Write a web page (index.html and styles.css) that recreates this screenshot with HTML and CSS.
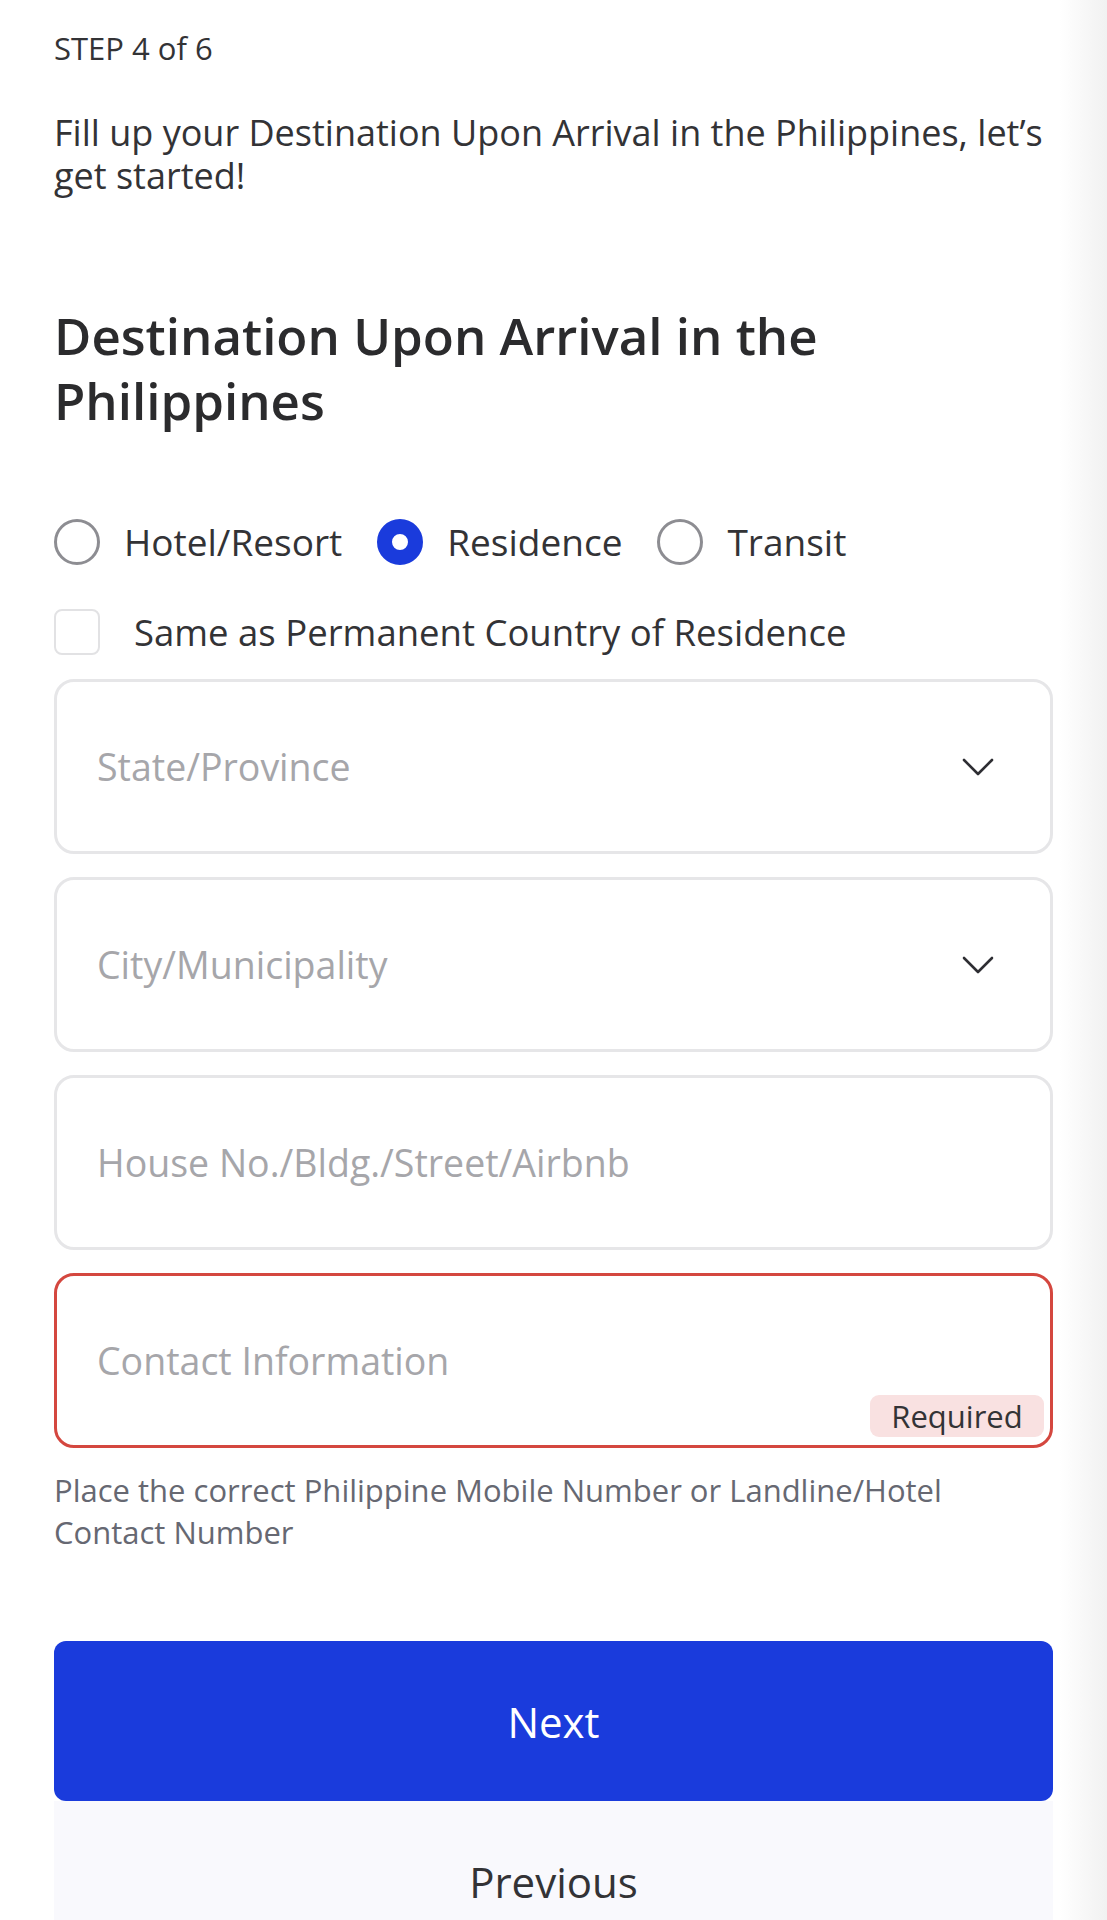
FILE: index.html
```html
<!DOCTYPE html>
<html lang="en">
<head>
<meta charset="utf-8">
<title>Step 4 of 6</title>
<link rel="stylesheet" href="styles.css">
</head>
<body>
<main class="page">
  <p class="step">STEP 4 of 6</p>
  <p class="intro">Fill up your Destination Upon Arrival in the Philippines, let’s get started!</p>
  <h1 class="title">Destination Upon Arrival in the Philippines</h1>

  <div class="radios">
    <label class="radio"><span class="dot"></span><span class="rlabel">Hotel/Resort</span></label>
    <label class="radio"><span class="dot checked"></span><span class="rlabel">Residence</span></label>
    <label class="radio"><span class="dot"></span><span class="rlabel">Transit</span></label>
  </div>

  <label class="check"><span class="box"></span><span class="clabel">Same as Permanent Country of Residence</span></label>

  <div class="fields">
    <div class="field">
      <span class="ph">State/Province</span>
      <svg class="chev" width="32" height="18" viewBox="0 0 32 18"><path d="M2 2 L16 16 L30 2" fill="none" stroke="#2e2e33" stroke-width="2.6" stroke-linecap="round" stroke-linejoin="round"/></svg>
    </div>
    <div class="field">
      <span class="ph">City/Municipality</span>
      <svg class="chev" width="32" height="18" viewBox="0 0 32 18"><path d="M2 2 L16 16 L30 2" fill="none" stroke="#2e2e33" stroke-width="2.6" stroke-linecap="round" stroke-linejoin="round"/></svg>
    </div>
    <div class="field">
      <span class="ph">House No./Bldg./Street/Airbnb</span>
    </div>
    <div class="field error">
      <span class="ph">Contact Information</span>
      <span class="badge">Required</span>
    </div>
  </div>

  <p class="helper">Place the correct Philippine Mobile Number or Landline/Hotel Contact Number</p>

  <div class="actions">
    <button class="btn next">Next</button>
    <button class="btn prev">Previous</button>
  </div>
</main>
</body>
</html>
```

FILE: styles.css
```css
* { box-sizing: border-box; }
html, body { margin: 0; padding: 0; }
body {
  font-family: "Open Sans", Lato, sans-serif;
  color: #333336;
  background: linear-gradient(to right, #ffffff 0, #ffffff 1060px, #f1f1f1 1107px);
  height: 1920px;
  overflow: hidden;
}
.page {
  width: 1107px;
  padding: 0 54px;
}
.step {
  margin: 0;
  padding-top: 31px;
  font-size: 31px;
  line-height: 34px;
}
.intro {
  margin: 46px 0 0;
  font-size: 36px;
  line-height: 43px;
  width: 1000px;
}
.title {
  margin: 106px 0 0;
  font-size: 51px;
  line-height: 65px;
  font-weight: 600;
  color: #2b2b2d;
  width: 860px;
}
.radios {
  display: flex;
  align-items: center;
  margin-top: 86px;
  gap: 35px;
}
.radio {
  display: flex;
  align-items: center;
  gap: 24px;
}
.dot {
  width: 46px;
  height: 46px;
  border-radius: 50%;
  border: 3px solid #8d8d92;
  flex: none;
}
.dot.checked {
  border: 15px solid #1a3bdc;
  background: #fff;
}
.rlabel {
  font-size: 37px;
  line-height: 46px;
}
.clabel {
  font-size: 36.5px;
  line-height: 46px;
}
.check {
  display: flex;
  align-items: center;
  gap: 34px;
  margin-top: 44px;
}
.box {
  width: 46px;
  height: 46px;
  border: 2px solid #e2e2e4;
  border-radius: 8px;
  flex: none;
}
.fields {
  margin-top: 24px;
  display: flex;
  flex-direction: column;
  gap: 23px;
}
.field {
  position: relative;
  height: 175px;
  border: 3px solid #e6e6e8;
  border-radius: 20px;
  display: flex;
  align-items: center;
  justify-content: space-between;
  padding: 0 56px 0 40px;
}
.field.error {
  border-color: #d4473f;
}
.ph {
  font-size: 37.5px;
  color: #a6a6aa;
}
.chev { display: block; }
.badge {
  position: absolute;
  right: 6px;
  bottom: 8px;
  width: 174px;
  text-align: center;
  background: #f9e1e1;
  color: #333336;
  font-size: 31px;
  line-height: 42px;
  border-radius: 9px;
}
.helper {
  margin: 21px 0 0;
  font-size: 31px;
  line-height: 42px;
  color: #666872;
  width: 960px;
}
.actions {
  margin-top: 88px;
  display: flex;
  flex-direction: column;
}
.btn {
  height: 160px;
  border: 0;
  font-family: inherit;
  font-size: 42px;
  width: 100%;
}
.next {
  background: #1a3bdc;
  color: #fff;
  border-radius: 12px;
}
.prev {
  background: #f9f9fd;
  color: #333336;
}
```
